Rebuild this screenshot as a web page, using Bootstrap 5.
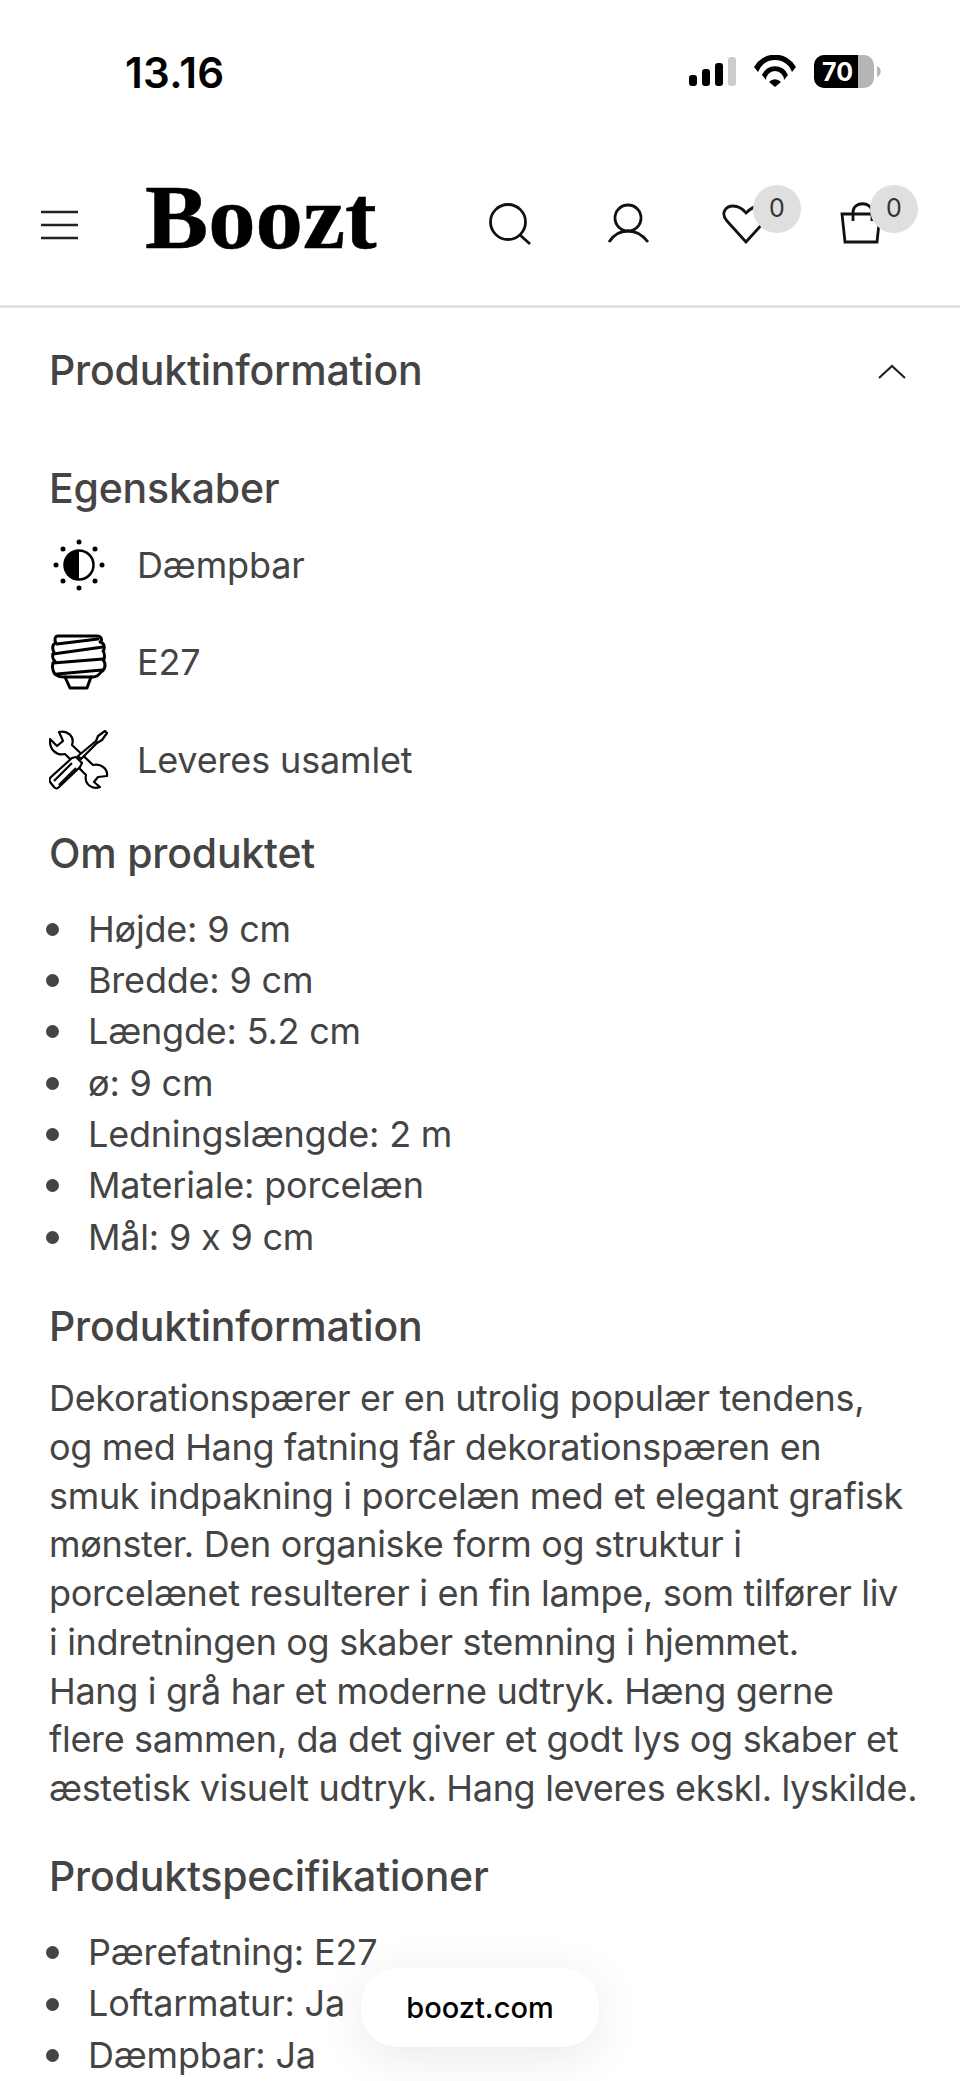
<!DOCTYPE html>
<html lang="da">
<head>
  <meta charset="UTF-8" />
  <meta name="viewport" content="width=device-width, initial-scale=1" />
  <title>Boozt - Produktinformation</title>
  <link href="https://cdn.jsdelivr.net/npm/bootstrap@5.3.0/dist/css/bootstrap.min.css" rel="stylesheet" />
  <style>
    html, body { height: 100%; overflow: hidden; }
    body { font-family: "Inter", "Liberation Sans", sans-serif; font-feature-settings: "calt" 0; color: #444; background: #fff; position: relative; }
    /* status bar */
    .statusbar { height: 113px; padding: 52px 76px 0 125px; color: #000; }
    .statusbar .clock { font-size: 42px; font-weight: 600; line-height: 42px; letter-spacing: .3px; }
    .statusicons { margin-top: 3px; }
    .batt-txt { font: 700 25px "Inter", sans-serif; fill: #fff; }
    /* header */
    .topbar { height: 195px; padding: 32px 0 0 41px; border-bottom: 3px solid #e2e2e2; }
    .logotxt { font-family: "Liberation Serif", serif; font-weight: 700; font-size: 92px; line-height: 1; color: #000; margin: 0 0 16px 67px; transform: scaleX(1.03); transform-origin: left center; -webkit-text-stroke: .5px #000; }
    .ticon { position: absolute; top: 0; left: 0; }
    .bubble { position: absolute; top: 185px; width: 48px; height: 48px; border-radius: 50%; background: #dfdfdf; color: #333; font-size: 25px; line-height: 46px; text-align: center; }
    /* content */
    .pagebody { padding: 0 49px; }
    .acc-head { font-size: 41px; font-weight: 500; line-height: 48px; color: #444; height: 156px; padding-top: 38px; letter-spacing: -.2px; }
    .sect-title { font-size: 41px; font-weight: 500; line-height: 48px; margin: 0; color: #444; letter-spacing: -.2px; }
    .after-rows { margin-top: 20px; }
    .after-list { margin-top: 39px; }
    .feat-row { height: 97.5px; gap: 28px; font-size: 36px; letter-spacing: -.15px; }
    .speclist { font-size: 36px; line-height: 51.35px; padding: 0; margin: 27px 0 0 -3px; list-style: none; letter-spacing: -.2px; }
    .speclist li { display: flex; align-items: center; }
    .speclist li::before { content: ""; width: 13px; height: 13px; border-radius: 50%; background: #444; margin-right: 29px; flex: none; }
    .bodytxt { font-size: 36px; line-height: 48.8px; margin: 24px 0 0; white-space: nowrap; letter-spacing: -.33px; }
    .sitepill { position: absolute; left: 361px; top: 1968px; width: 238px; height: 79px; border-radius: 36px; background: #fff; box-shadow: 0 10px 50px rgba(0,0,0,.09); color: #000; font-size: 29px; font-weight: 500; }
  </style>
</head>
<body>
  <div class="statusbar d-flex justify-content-between">
    <div class="clock">13.16</div>
    <svg width="195" height="36" viewBox="0 0 195 36" class="statusicons">
      <g fill="#000">
        <rect x="0" y="20" width="8" height="11" rx="3"/>
        <rect x="13" y="14" width="8" height="17" rx="3"/>
        <rect x="26" y="8" width="8" height="23" rx="3"/>
      </g>
      <rect x="39" y="2" width="8" height="29" rx="3" fill="#ccc"/>
      <path d="M65 12a24 24 0 0 1 42 0l-4 5a18 18 0 0 0-34 0zM73 20a14 14 0 0 1 26 0l-4 5a8 8 0 0 0-18 0z" fill="#000"/>
      <path d="M86 32l-6-5a8 8 0 0 1 12 0z" fill="#000"/>
      <rect x="125" y="0" width="60" height="33" rx="10" fill="#b5b5b5"/>
      <path d="M135 0h34v33h-34a10 10 0 0 1-10-10v-13a10 10 0 0 1 10-10z" fill="#000"/>
      <path d="M188 11a6 6 0 0 1 0 11z" fill="#b5b5b5"/>
      <text x="133" y="26" class="batt-txt">70</text>
    </svg>
  </div>

  <div class="topbar d-flex align-items-center">
    <svg width="37" height="30" viewBox="0 0 37 30"><path d="M0 2h37M0 15h37M0 28h37" stroke="#222" stroke-width="2.5"/></svg>
    <div class="logotxt">Boozt</div>
  </div>
  <svg class="ticon" width="960" height="260" viewBox="0 0 960 260" fill="none" stroke="#111" stroke-width="2.8">
    <circle cx="508" cy="222" r="17.5"/><path d="M520 235l10 9"/>
    <circle cx="628" cy="218" r="13"/><path d="M609 242c5-8 11-11 19-11s14 3 20 11"/>
    <path d="M746 242l-19-21c-7-8-1-15 6-15 5 0 9 2 13 7 4-4 8-7 13-7 7 0 13 7 6 15z"/>
    <path d="M842 214h38l-3 28h-32zM853 221v-9c0-11 19-11 19 0v9"/>
  </svg>
  <div class="bubble" style="left:753px">0</div>
  <div class="bubble" style="left:870px">0</div>

  <div class="pagebody">
    <div class="acc-head d-flex justify-content-between">
      <span>Produktinformation</span>
      <svg class="me-1" width="30" height="20" viewBox="0 0 30 20" fill="none" stroke="#222" stroke-width="2.2" style="margin-top:15px"><path d="M2 17L15 5l13 12"/></svg>
    </div>

    <h2 class="sect-title">Egenskaber</h2>
    <div class="mt-1">
      <div class="feat-row d-flex align-items-center">
        <svg width="60" height="60" viewBox="0 0 60 60">
          <circle cx="30" cy="30" r="14.5" fill="#fff" stroke="#000" stroke-width="2.5"/>
          <path d="M30 15a15 15 0 0 0 0 30z" fill="#000"/>
          <g fill="#000"><circle cx="30" cy="7" r="2.5"/><circle cx="30" cy="53" r="2.5"/><circle cx="7" cy="30" r="2.5"/><circle cx="53" cy="30" r="2.5"/><circle cx="14" cy="14" r="2.5"/><circle cx="46" cy="14" r="2.5"/><circle cx="14" cy="46" r="2.5"/><circle cx="46" cy="46" r="2.5"/></g>
        </svg>
        <span>Dæmpbar</span>
      </div>
      <div class="feat-row d-flex align-items-center">
        <svg width="60" height="60" viewBox="0 0 60 60" fill="none" stroke="#000" stroke-width="3" stroke-linejoin="round" stroke-linecap="round">
          <path d="M9 4H48C52 4 54 8 51 10C56 11 56 17 54 19C56 21 56 27 54 28C57 31 57 37 52 40C50 43 48 45 44 45H15C10 45 5 44 4 38C3 34 3 31 6 29C3 27 3 22 5 20C3 17 3 12 7 11C5 8 6 4 9 4Z"/>
          <path d="M8 12L49 7M4 22L54 15M4 31L54 27M8 42L53 38"/>
          <path d="M16 45L21 56H38L42 45"/>
        </svg>
        <span>E27</span>
      </div>
      <div class="feat-row d-flex align-items-center">
        <svg width="60" height="60" viewBox="0 0 60 60" fill="none" stroke="#000" stroke-width="2.2" stroke-linejoin="round">
          <path d="M10 2C18 0 26 6 23 15L44 35C52 33 59 39 58 46L49 47L45 52L51 57C43 60 35 54 37 45L16 24C8 26 0 20 1 9L8 16L14 11Z"/>
          <path d="M47 11L49 6L56 1L58 3L53 10L48 13L32 29L29 26Z" fill="#fff"/>
          <path d="M27 27L33 33L31 37L10 57C8 59 7 59 5 57L1 52C0 50 0 49 2 47L23 28Z" fill="#fff"/>
          <path d="M5 51L23 33M10 55L27 38"/>
        </svg>
        <span>Leveres usamlet</span>
      </div>
    </div>

    <h2 class="sect-title after-rows">Om produktet</h2>
    <ul class="speclist">
      <li>Højde: 9 cm</li>
      <li>Bredde: 9 cm</li>
      <li>Længde: 5.2 cm</li>
      <li>ø: 9 cm</li>
      <li>Ledningslængde: 2 m</li>
      <li>Materiale: porcelæn</li>
      <li>Mål: 9 x 9 cm</li>
    </ul>

    <h2 class="sect-title after-list">Produktinformation</h2>
    <p class="bodytxt">Dekorationspærer er en utrolig populær tendens,<br>og med Hang fatning får dekorationspæren en<br>smuk indpakning i porcelæn med et elegant grafisk<br>mønster. Den organiske form og struktur i<br>porcelænet resulterer i en fin lampe, som tilfører liv<br>i indretningen og skaber stemning i hjemmet.<br>Hang i grå har et moderne udtryk. Hæng gerne<br>flere sammen, da det giver et godt lys og skaber et<br>æstetisk visuelt udtryk. Hang leveres ekskl. lyskilde.</p>

    <h2 class="sect-title after-list">Produktspecifikationer</h2>
    <ul class="speclist">
      <li>Pærefatning: E27</li>
      <li>Loftarmatur: Ja</li>
      <li>Dæmpbar: Ja</li>
    </ul>
  </div>

  <div class="sitepill d-flex align-items-center justify-content-center">boozt.com</div>

  <script src="https://cdn.jsdelivr.net/npm/bootstrap@5.3.0/dist/js/bootstrap.bundle.min.js"></script>
</body>
</html>
